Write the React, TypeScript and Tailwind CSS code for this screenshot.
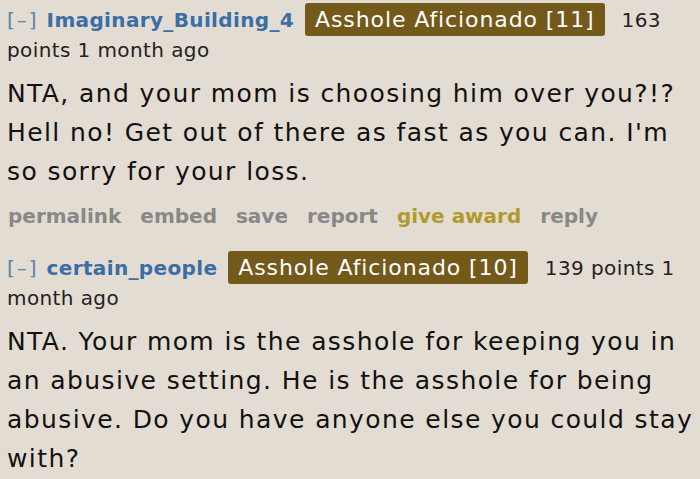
import React from 'react'

type Comment = {
  author: string
  flair: string
  points: string
  time: string
  body: string
  showActions?: boolean
}

const comments: Comment[] = [
  {
    author: 'Imaginary_Building_4',
    flair: 'Asshole Aficionado [11]',
    points: '163 points',
    time: '1 month ago',
    body: "NTA, and your mom is choosing him over you?!? Hell no! Get out of there as fast as you can. I'm so sorry for your loss.",
    showActions: true,
  },
  {
    author: 'certain_people',
    flair: 'Asshole Aficionado [10]',
    points: '139 points',
    time: '1 month ago',
    body: 'NTA. Your mom is the asshole for keeping you in an abusive setting. He is the asshole for being abusive. Do you have anyone else you could stay with?',
  },
]

function CommentBlock({ c }: { c: Comment }) {
  return (
    <div>
      <p className="text-[20px] leading-[30px] text-[#222] tracking-[0.4px]">
        <span className="text-[#5b84b1] tracking-[2px] mr-[8px]">[–]</span>
        <span className="font-bold text-[#3a6ea5] tracking-[0.35px] mr-[11px]">{c.author}</span>
        <span className="bg-[#735a1a] text-white text-[22px] tracking-[0.9px] py-[4px] px-[10px] rounded-[3px] mr-[17px]">
          {c.flair}
        </span>
        <span>
          {c.points} {c.time}
        </span>
      </p>
      <p className="text-[25px] leading-[39px] text-[#111] tracking-[1.4px] mt-[9px]">{c.body}</p>
      {c.showActions && (
        <div className="flex gap-[19px] text-[20px] leading-[28px] font-bold text-[#888] mt-[11px] pl-[1px]">
          <span>permalink</span>
          <span>embed</span>
          <span>save</span>
          <span>report</span>
          <span className="text-[#b09a2e]">give award</span>
          <span>reply</span>
        </div>
      )}
    </div>
  )
}

export default function App() {
  return (
    <div
      className="w-[700px] h-[479px] overflow-hidden bg-[#e3dcd2] pl-[7px] pt-[5px] flex flex-col gap-[23px]"
      style={{ fontFamily: '"DejaVu Sans", Verdana, sans-serif' }}
    >
      {comments.map((c) => (
        <CommentBlock key={c.author} c={c} />
      ))}
    </div>
  )
}
